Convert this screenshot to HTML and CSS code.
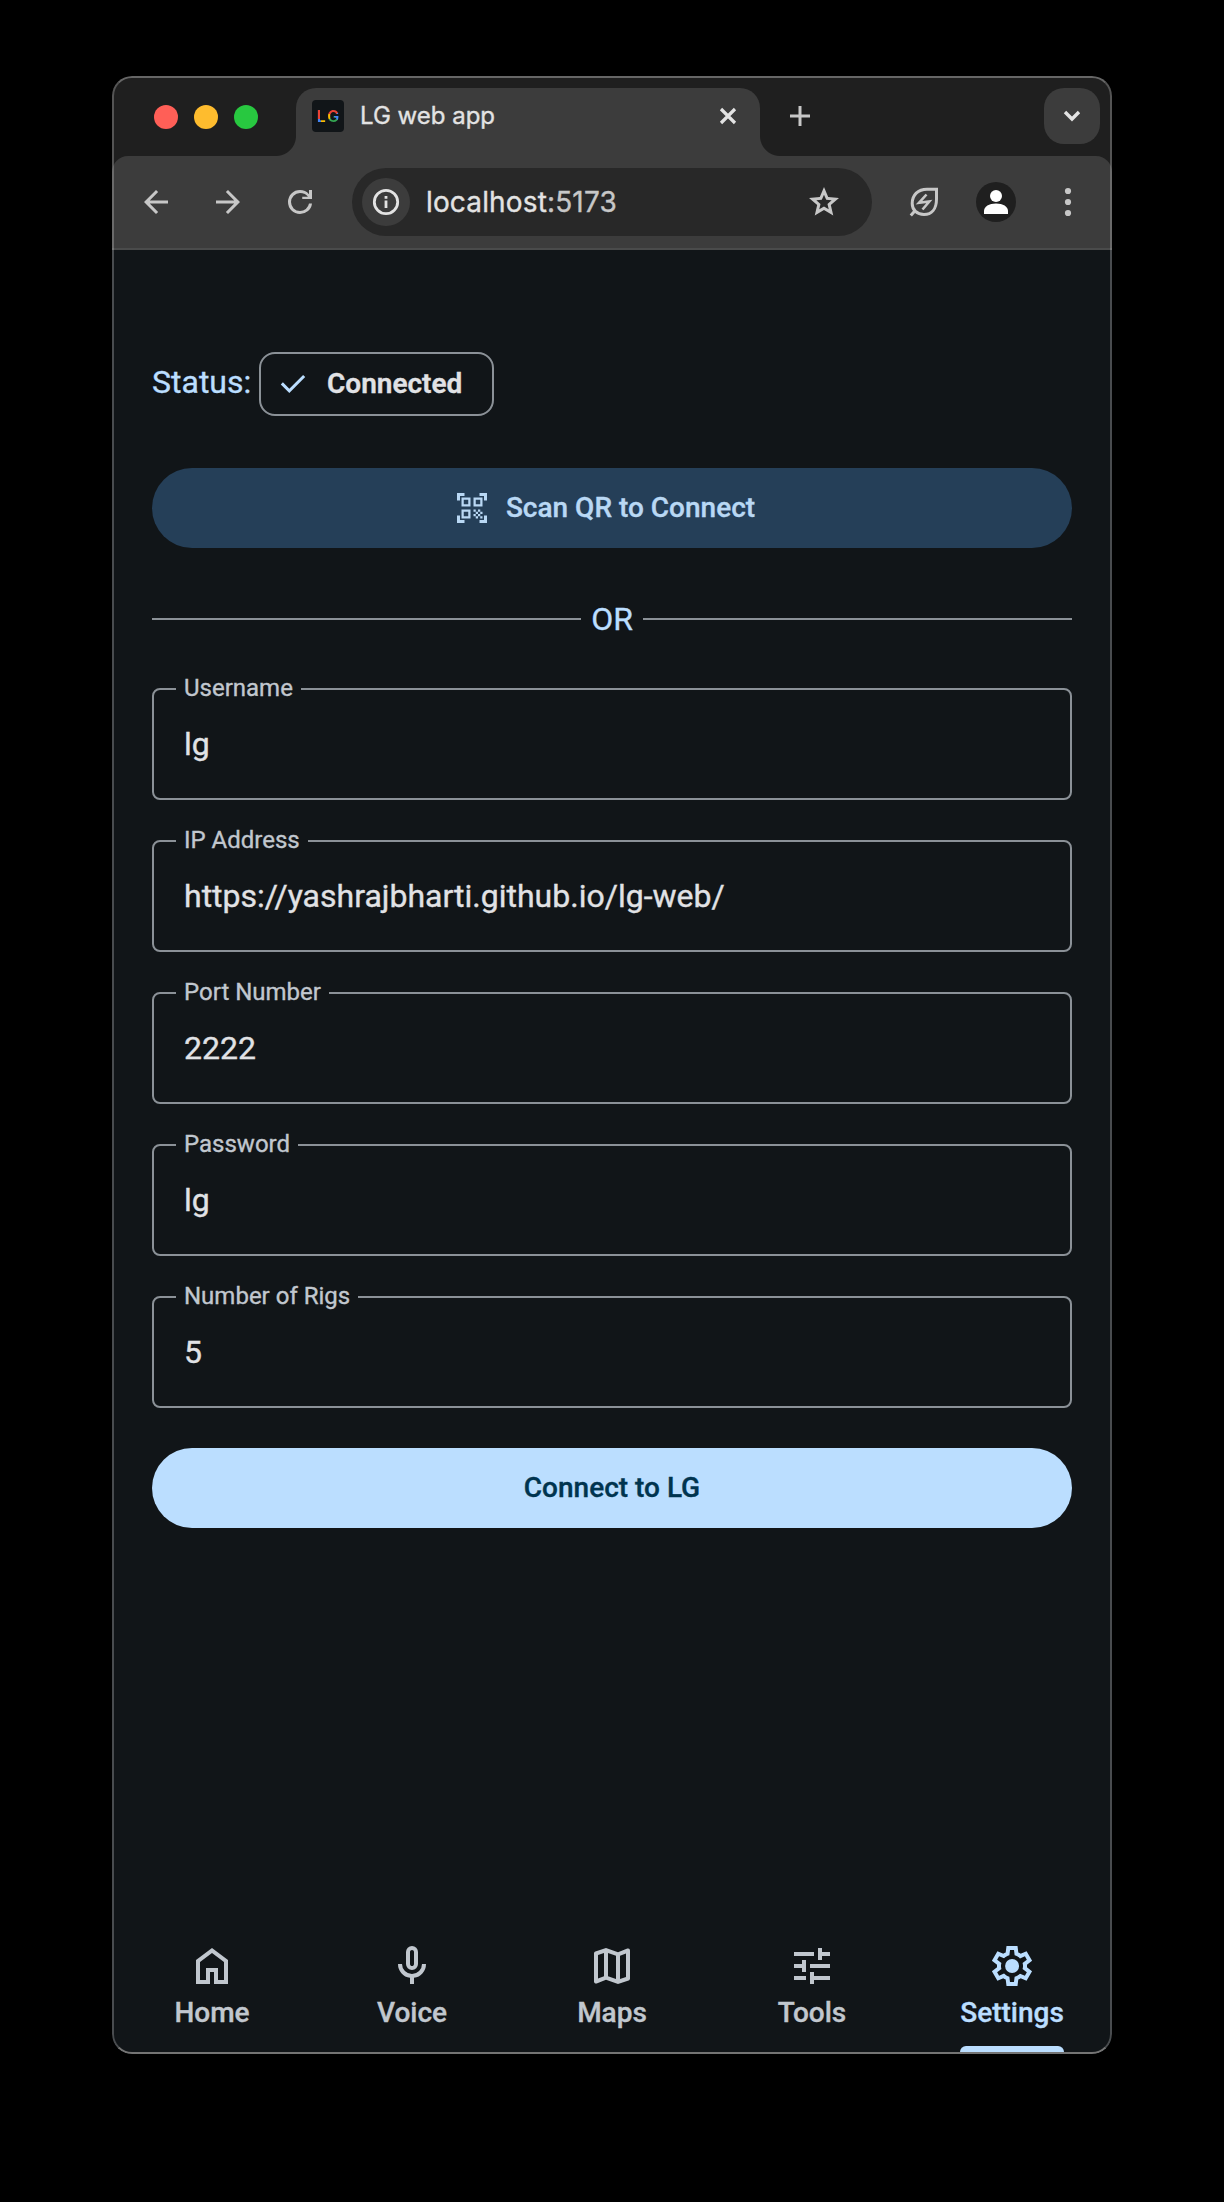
FILE: index.html
```html
<!DOCTYPE html>
<html lang="en">
<head>
<meta charset="utf-8">
<title>LG web app</title>
<link rel="stylesheet" href="styles.css">
</head>
<body>
<div class="window">
  <header class="tabstrip">
    <div class="lights"><i class="red"></i><i class="yellow"></i><i class="green"></i></div>
    <div class="tab">
      <div class="favicon"><span class="fav-l">L</span><span class="fav-g">G</span></div>
      <span class="tab-title">LG web app</span>
      <svg class="close" width="20" height="20" viewBox="0 0 20 20"><path d="M3 3l14 14M17 3L3 17"/></svg>
    </div>
    <svg class="plus" width="20" height="20" viewBox="0 0 20 20"><path d="M10 0v20M0 10h20"/></svg>
    <div class="tab-search"><svg width="20" height="14" viewBox="0 0 20 14"><path d="M3 3l7 7 7-7"/></svg></div>
  </header>
  <div class="toolbar">
    <svg class="icon" viewBox="0 0 24 24"><path d="m12 20-8-8 8-8 1.425 1.4L7.825 11H20v2H7.825l5.6 5.6Z"/></svg>
    <svg class="icon" viewBox="0 0 24 24"><path d="m12 20-1.425-1.4 5.6-5.6H4v-2h12.175l-5.6-5.6L12 4l8 8Z"/></svg>
    <svg class="icon" viewBox="0 0 24 24"><path d="M12 20q-3.35 0-5.675-2.325Q4 15.35 4 12q0-3.35 2.325-5.675Q8.65 4 12 4q1.725 0 3.3.713 1.575.712 2.7 2.037V4h2v6h-6.5V8.5h3.8q-.8-1.2-2.087-1.85Q13.625 6 12 6 9.5 6 7.75 7.75T6 12q0 2.5 1.75 4.25T12 18q2.2 0 3.9-1.4T18 13h2q-.3 3-2.65 5T12 20Z"/></svg>
    <div class="omnibox">
      <div class="site-info"><svg width="28" height="28" viewBox="0 0 28 28"><circle cx="14" cy="14" r="11.7"/><path d="M14 12.5v7.5M14 8v2.7"/></svg></div>
      <div class="url">localhost<span>:5173</span></div>
      <svg class="icon" viewBox="0 0 24 24"><path d="m8.85 16.825 3.15-1.9 3.15 1.925-.825-3.6 2.775-2.4-3.65-.325-1.45-3.4-1.45 3.375-3.65.325 2.775 2.425ZM5.825 21l1.625-7.025L2 9.25l7.2-.625L12 2l2.8 6.625 7.2.625-5.45 4.725L18.175 21 12 17.275Z"/></svg>
    </div>
    <svg class="leaf" width="36" height="36" viewBox="0 0 36 36"><path d="M30.5 5.2V15C30.5 25 25.5 30.5 18 30.5 11 30.5 6.2 26 6.2 19.5 6.2 11 12 5.2 21 5.2ZM4.8 31.5l4-4.5"/><path class="bolt" d="M20.5 10.5L13 18.8l10.3-1.3L16.5 25.5"/></svg>
    <svg class="avatar" width="40" height="40" viewBox="0 0 40 40"><circle class="disc" cx="20" cy="20" r="20"/><circle cx="20" cy="14" r="6"/><path d="M8 32v-3c0-4.5 5-7.500 12-7.500s12 3 12 7.500v3Z"/></svg>
    <svg class="menu" width="8" height="30" viewBox="0 0 8 30"><circle cx="4" cy="4" r="3.1"/><circle cx="4" cy="15" r="3.1"/><circle cx="4" cy="26" r="3.1"/></svg>
  </div>
  <main class="page">
    <div class="status">
      <span class="status-label">Status:</span>
      <div class="chip"><svg class="icon" viewBox="0 0 24 24"><path d="m9.55 18-5.7-5.7 1.425-1.425L9.55 15.15l9.175-9.175L20.15 7.4Z"/></svg><span>Connected</span></div>
    </div>
    <button class="btn tonal"><svg class="icon" viewBox="0 0 24 24"><path d="M9.5 6.500v3h-3v-3h3M11 5H5v6h6V5zm-1.500 9.500v3h-3v-3h3M11 13H5v6h6v-6zm6.500-6.500v3h-3v-3h3M19 5h-6v6h6V5zm-6 8h1.500v1.500H13V13zm1.500 1.500H16V16h-1.500v-1.500zM16 13h1.500v1.500H16V13zm-3 3h1.500v1.500H13V16zm1.500 1.500H16V19h-1.500v-1.500zM16 16h1.500v1.500H16V16zm1.500-1.500H19V16h-1.500v-1.500zm0 3H19V19h-1.500v-1.500zM22 7h-2V4h-3V2h5v5zm0 15v-5h-2v3h-3v2h5zM2 22h5v-2H4v-3H2v5zM2 2v5h2V4h3V2H2z"/></svg><span>Scan QR to Connect</span></button>
    <div class="divider"><span>OR</span></div>
    <form class="fields">
      <fieldset><legend>Username</legend><span>lg</span></fieldset>
      <fieldset><legend>IP Address</legend><span>https://yashrajbharti.github.io/lg-web/</span></fieldset>
      <fieldset><legend>Port Number</legend><span>2222</span></fieldset>
      <fieldset><legend>Password</legend><span>lg</span></fieldset>
      <fieldset><legend>Number of Rigs</legend><span>5</span></fieldset>
    </form>
    <button class="btn filled"><span>Connect to LG</span></button>
  </main>
  <nav class="nav">
    <a><svg viewBox="0 0 24 24"><path d="M6 19h3v-6h6v6h3v-9l-6-4.500L6 10v9Zm-2 2V9l8-6 8 6v12h-7v-6h-2v6H4Z"/></svg><span>Home</span></a>
    <a><svg viewBox="0 0 24 24"><path d="M12 14q-1.250 0-2.125-.875T9 11V5q0-1.250.875-2.125T12 2q1.250 0 2.125.875T15 5v6q0 1.250-.875 2.125T12 14Zm-1 7v-3.075q-2.600-.350-4.300-2.325Q5 13.625 5 11h2q0 2.075 1.463 3.538Q9.925 16 12 16q2.075 0 3.538-1.463Q17 13.075 17 11h2q0 2.625-1.700 4.600-1.700 1.975-4.300 2.325V21Zm1-9q.425 0 .713-.288Q13 11.425 13 11V5q0-.425-.287-.713Q12.425 4 12 4t-.712.287Q11 4.575 11 5v6q0 .425.288.712.287.288.712.288Z"/></svg><span>Voice</span></a>
    <a><svg viewBox="0 0 24 24"><path d="m15 21-6-2.100-4.650 1.800q-.5.200-.925-.112Q3 20.275 3 19.750v-14q0-.325.188-.575.187-.250.512-.375L9 3l6 2.100 4.650-1.800q.5-.2.925.112.425.313.425.838v14q0 .325-.188.575-.187.250-.512.375Zm-1-2.450V6.850l-4-1.400v11.700Zm2 0 3-1V5.700l-3 1.150ZM5 18.300l3-1.150V5.450l-3 1Z"/></svg><span>Maps</span></a>
    <a><svg viewBox="0 0 24 24"><path d="M11 21v-6h2v2h8v2h-8v2h-2Zm-8-2v-2h6v2H3Zm4-4v-2H3v-2h4V9h2v6H7Zm4-2v-2h10v2H11Zm4-4V3h2v2h4v2h-4v2h-2ZM3 7V5h10v2H3Z"/></svg><span>Tools</span></a>
    <a class="active"><svg viewBox="0 0 24 24"><path d="m9.250 22-.4-3.200q-.325-.125-.612-.3-.288-.175-.563-.375L4.700 19.375l-2.750-4.750 2.575-1.950Q4.500 12.500 4.500 12.337v-.675q0-.162.025-.337L1.950 9.375l2.750-4.750 2.975 1.250q.275-.2.575-.375.3-.175.600-.3l.4-3.200h5.500l.4 3.200q.325.125.613.3.287.175.562.375l2.975-1.250 2.750 4.750-2.575 1.950q.025.175.025.337v.675q0 .163-.050.338l2.575 1.950-2.750 4.750-2.950-1.250q-.275.2-.575.375-.3.175-.6.300l-.4 3.200ZM12.050 15.500q1.450 0 2.475-1.025Q15.550 13.450 15.550 12q0-1.450-1.025-2.475Q13.500 8.500 12.050 8.500q-1.475 0-2.488 1.025Q8.550 10.550 8.550 12q0 1.450 1.012 2.475Q10.575 15.500 12.050 15.500ZM11 20h1.975l.350-2.650q.775-.2 1.438-.588.662-.387 1.212-.937l2.475 1.025.975-1.700-2.150-1.625q.125-.350.175-.738.050-.387.050-.787t-.050-.788q-.050-.387-.175-.737l2.150-1.625-.975-1.700-2.475 1.050q-.550-.575-1.212-.963-.663-.387-1.438-.587L13 4h-1.975l-.350 2.650q-.775.200-1.437.587-.663.388-1.213.938L5.550 7.150l-.975 1.700 2.150 1.600q-.125.375-.175.750-.050.375-.050.800 0 .4.050.775.050.375.175.750l-2.150 1.625.975 1.700 2.475-1.050q.550.575 1.213.962.662.388 1.437.588Z"/></svg><span>Settings</span></a>
  </nav>
</div>
</body>
</html>
```
FILE: styles.css
```css
* { box-sizing: border-box; }
body { margin: 0; padding: 76px 112px 148px; background: #000; font-family: Roboto, sans-serif; -webkit-text-stroke: 0.35px currentColor; }
svg { display: block; flex: none; }
.window {
  position: relative;
  width: 1000px; height: 1978px;
  display: flex; flex-direction: column;
  border-radius: 20px; overflow: hidden;
  background: linear-gradient(#1f1f1f 0 120px, #111518 120px);
}
.window::after {
  content: ""; position: absolute; inset: 0; z-index: 2; pointer-events: none;
  border: 2px solid; border-radius: 20px;
  border-color: #666 rgba(255,255,255,.24) #747474 rgba(255,255,255,.24);
}

/* Browser chrome */
.tabstrip { height: 80px; background: #1f1f1f; display: flex; align-items: flex-start; padding: 12px 12px 0 42px; }
.lights { display: flex; gap: 16px; padding-top: 17px; width: 142px; }
.lights i { width: 24px; height: 24px; border-radius: 50%; }
.red { background: #ff5f57; }
.yellow { background: #febc2e; }
.green { background: #28c840; }
.tab {
  position: relative; width: 464px; height: 68px; padding: 0 22px 12px 16px;
  display: flex; align-items: center;
  background: #3c3c3c; border-radius: 20px 20px 0 0;
}
.tab::before, .tab::after { content: ""; position: absolute; bottom: 0; width: 20px; height: 20px; }
.tab::before { left: -20px; background: radial-gradient(circle at 0 0, transparent 19.5px, #3c3c3c 20.5px); }
.tab::after { right: -20px; background: radial-gradient(circle at 100% 0, transparent 19.5px, #3c3c3c 20.5px); }
.favicon {
  width: 32px; height: 32px; border-radius: 4px; background: #111518;
  display: flex; justify-content: center; gap: 1.5px;
  font: 600 16px/32px Inter, sans-serif;
  -webkit-text-stroke: 0;
}
.favicon span { color: transparent; -webkit-background-clip: text; background-clip: text; }
.fav-l { background-image: linear-gradient(#ea4335 0 19px, transparent 19px), linear-gradient(90deg, #4285f4 0 4px, #fbbc05 4px); }
.fav-g { background-image: conic-gradient(#ea4335 0 60deg, #4285f4 60deg 135deg, #34a853 135deg 230deg, #fbbc05 230deg 295deg, #ea4335 295deg); }
.tab-title { flex: 1; padding-left: 16px; font: 400 24px/32px Inter, sans-serif; color: #e3e3e3; }
.close, .plus, .tab-search svg { fill: none; stroke: #e3e3e3; stroke-width: 3.2; }
.plus { stroke: #c7c7c7; stroke-width: 3; margin: 18px auto 0 30px; }
.tab-search { width: 56px; height: 56px; border-radius: 20px; background: #3c3c3c; display: flex; align-items: center; justify-content: center; }
.tab-search svg { stroke-width: 3.4; }
.toolbar {
  height: 94px; padding: 10px 40px 10px 26px;
  display: flex; align-items: center;
  background: #3c3c3c; border-bottom: 2px solid #4a4b4b;
  border-radius: 16px 16px 0 0;
  fill: #c7c7c7;
}
.icon { width: 36px; height: 36px; }
.toolbar > .icon { margin-right: 36px; }
.omnibox {
  width: 520px; height: 68px; margin: 0 34px 0 -2px; padding: 0 30px 0 10px; border-radius: 34px; background: #282828;
  display: flex; align-items: center;
}
.site-info { width: 48px; height: 48px; border-radius: 50%; background: #3c3c3c; display: flex; align-items: center; justify-content: center; }
.site-info svg { fill: none; stroke: #e3e3e3; stroke-width: 2.8; }
.url { flex: 1; padding-left: 16px; font: 400 28px/40px Inter, sans-serif; letter-spacing: .15px; color: #e3e3e3; }
.url span { color: #c7c7c7; }
.leaf { fill: none; stroke: #c7c7c7; stroke-width: 3; }
.bolt { stroke-width: 2.6; }
.avatar { margin: 0 auto 0 34px; fill: #fff; }
.disc { fill: #1f1f1f; }

/* App page */
.page { flex: 1; padding: 102px 40px 0; }
.status { display: flex; align-items: center; height: 64px; color: #bbdeff; }
.status-label { font-size: 32px; width: 107px; padding-bottom: 4px; }
.chip {
  height: 64px; padding: 0 30px 1px 14px; display: flex; align-items: center; gap: 16px;
  border: 2px solid #8b9197; border-radius: 16px;
  color: #e1e2e5; font-size: 28px; font-weight: 600;
}
.chip svg { fill: #bbdeff; }
.btn {
  width: 100%; height: 80px; padding: 0; border: 0; border-radius: 40px;
  display: flex; align-items: center; justify-content: center; gap: 16px;
  font: 500 28px/40px Roboto, sans-serif;
}
.tonal { margin-top: 52px; padding-right: 15px; background: #253f58; color: #b9d8f4; }
.tonal svg { fill: currentColor; }
.filled { margin-top: 40px; background: #bbdeff; color: #00344f; }
.divider { margin-top: 51px; height: 40px; display: flex; align-items: center; gap: 10px; color: #bbdeff; font-size: 32px; }
.divider::before, .divider::after { content: ""; flex: 1; height: 2px; background: #8b9197; }
.fields { margin-top: 49px; display: grid; gap: 40px; }
fieldset { min-width: 0; height: 112px; margin: 0; padding: 0 22px; border: 2px solid #8b9197; border-radius: 8px; }
legend { padding: 0 8px; height: 2px; line-height: 0; font-size: 24px; color: #c1c7ce; }
fieldset span { display: block; padding: 34px 8px 0; font-size: 32px; line-height: 40px; color: #e1e2e5; }

/* Bottom navigation */
.nav { height: 114px; display: grid; grid-template-columns: repeat(5, 1fr); justify-items: center; color: #c1c7ce; fill: currentColor; }
.nav a { height: 114px; padding-top: 2px; display: flex; flex-direction: column; align-items: center; font-size: 28px; font-weight: 500; line-height: 40px; }
.nav svg { width: 48px; height: 48px; }
.nav span { margin-top: 3px; }
.active { color: #bbdeff; }
.active::after { content: ""; width: 100%; height: 8px; margin-top: auto; background: #bbdeff; border-radius: 6px 6px 0 0; }
```
